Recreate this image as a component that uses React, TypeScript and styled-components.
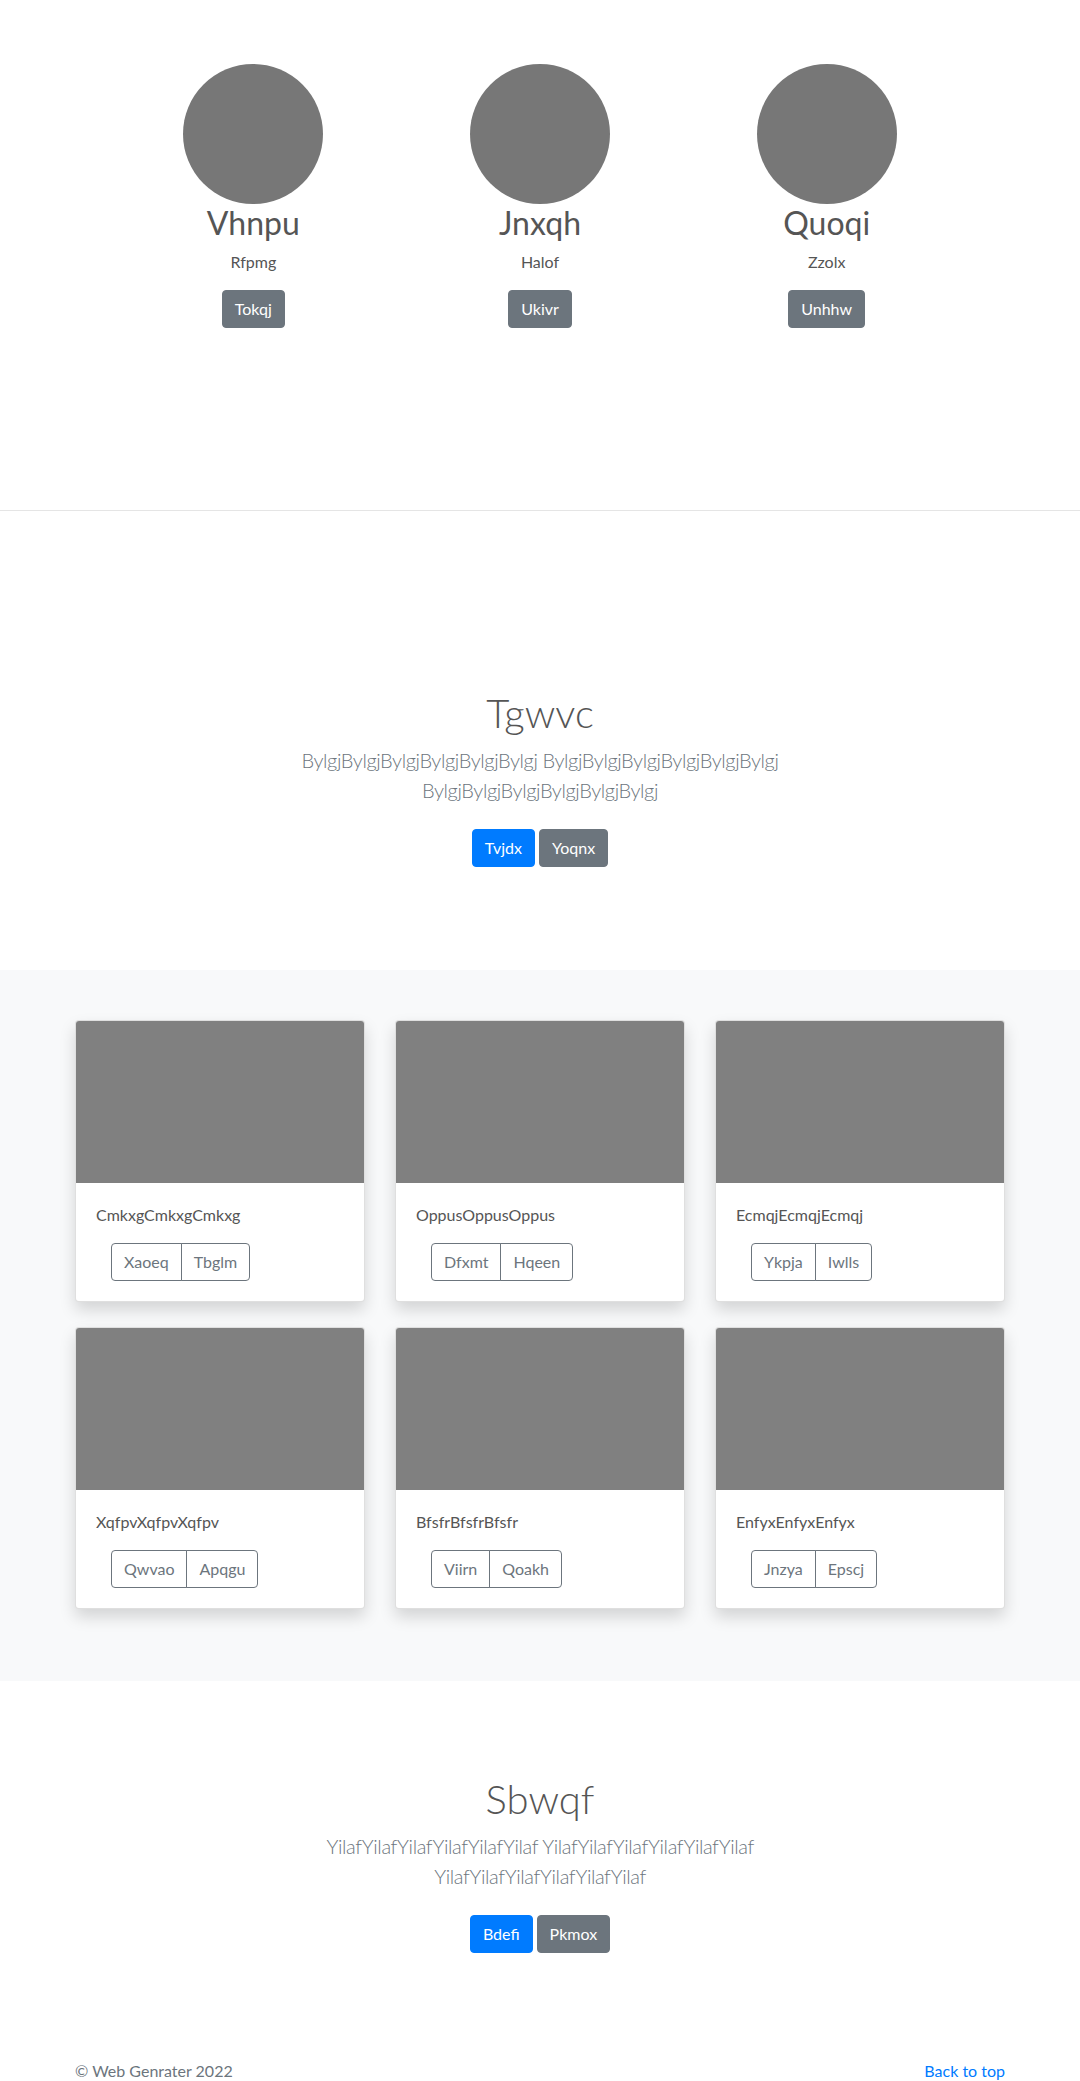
import React from "react";
import styled, { createGlobalStyle, css } from "styled-components";

const GlobalStyle = createGlobalStyle`
  html, body { margin: 0; padding: 0; background: #fff; }
  body {
    font-family: Lato, "Open Sans", Arial, sans-serif;
    font-size: 16px;
    line-height: 1.5;
    color: #212529;
  }
  * { box-sizing: border-box; }
`;

const Page = styled.div`
  width: 100%;
`;

const Marketing = styled.section`
  padding: 64px 0 182px;
  border-bottom: 1px solid #e5e5e5;
`;

const MarketingRow = styled.div`
  width: 860px;
  margin: 0 auto;
  display: grid;
  grid-template-columns: repeat(3, 1fr);
`;

const Person = styled.div`
  display: flex;
  flex-direction: column;
  align-items: center;
  text-align: center;
`;

const Avatar = styled.div`
  width: 140px;
  height: 140px;
  border-radius: 50%;
  background: #777777;
`;

const PersonName = styled.h2`
  margin: 0 0 8px;
  font-size: 32px;
  font-weight: 400;
  line-height: 1.2;
  color: #555;
`;

const PersonRole = styled.p`
  margin: 0 0 16px;
  font-size: 16px;
  line-height: 24px;
  color: #555;
`;

const Button = styled.a<{ $variant: "primary" | "secondary" }>`
  display: inline-block;
  padding: 6px 12px;
  font-size: 16px;
  line-height: 24px;
  border-radius: 4px;
  border: 1px solid transparent;
  color: #fff;
  text-decoration: none;
  cursor: pointer;
  ${(p) =>
    p.$variant === "primary"
      ? css`
          background: #007bff;
          border-color: #007bff;
        `
      : css`
          background: #6c757d;
          border-color: #6c757d;
        `}
`;

const Hero = styled.section<{ $top: number; $bottom: number }>`
  padding: ${(p) => p.$top}px 0 ${(p) => p.$bottom}px;
  text-align: center;
`;

const HeroInner = styled.div`
  width: 610px;
  margin: 0 auto;
`;

const HeroTitle = styled.h1`
  margin: 0 0 8px;
  font-size: 40px;
  font-weight: 300;
  line-height: 48px;
  color: #555;
`;

const Lead = styled.p`
  margin: 0 0 16px;
  font-size: 20px;
  font-weight: 300;
  line-height: 30px;
  letter-spacing: -0.4px;
  color: #6c757d;
`;

const ButtonRow = styled.div`
  padding: 8px 0;
  display: flex;
  justify-content: center;
  gap: 4px;
`;

const Album = styled.section`
  background: #f8f9fa;
  padding: 50px 0 48px;
`;

const CardGrid = styled.div`
  width: 930px;
  margin: 0 auto;
  display: grid;
  grid-template-columns: repeat(3, 290px);
  column-gap: 30px;
  row-gap: 25px;
`;

const Card = styled.div`
  background: #fff;
  border: 1px solid rgba(0, 0, 0, 0.125);
  border-radius: 4px;
  box-shadow: 0 8px 16px rgba(0, 0, 0, 0.15);
  overflow: hidden;
`;

const CardImage = styled.div`
  height: 162px;
  background: #808080;
`;

const CardBody = styled.div`
  padding: 20px;
`;

const CardText = styled.p`
  margin: 0 0 16px;
  font-size: 16px;
  line-height: 24px;
  color: #555;
`;

const ButtonGroup = styled.div`
  display: inline-flex;
  margin-left: 15px;
`;

const OutlineButton = styled.button`
  font-family: inherit;
  font-size: 16px;
  line-height: 24px;
  padding: 6px 12px;
  background: transparent;
  color: #6c757d;
  border: 1px solid #6c757d;
  cursor: pointer;
  &:first-child {
    border-radius: 4px 0 0 4px;
  }
  &:last-child {
    border-radius: 0 4px 4px 0;
    margin-left: -1px;
  }
`;

const AlbumBottom = styled.div`
  height: 24px;
`;

const Footer = styled.footer`
  width: 930px;
  margin: 0 auto;
  padding: 48px 0;
  display: flex;
  justify-content: space-between;
  font-size: 16px;
  line-height: 24px;
`;

const FooterText = styled.p`
  margin: 0;
  color: #6c757d;
`;

const FooterLink = styled.a`
  color: #007bff;
  text-decoration: none;
`;

const people = [
  { name: "Vhnpu", role: "Rfpmg", btn: "Tokqj" },
  { name: "Jnxqh", role: "Halof", btn: "Ukivr" },
  { name: "Quoqi", role: "Zzolx", btn: "Unhhw" },
];

const cards = [
  { text: "CmkxgCmkxgCmkxg", a: "Xaoeq", b: "Tbglm" },
  { text: "OppusOppusOppus", a: "Dfxmt", b: "Hqeen" },
  { text: "EcmqjEcmqjEcmqj", a: "Ykpja", b: "Iwlls" },
  { text: "XqfpvXqfpvXqfpv", a: "Qwvao", b: "Apqgu" },
  { text: "BfsfrBfsfrBfsfr", a: "Viirn", b: "Qoakh" },
  { text: "EnfyxEnfyxEnfyx", a: "Jnzya", b: "Epscj" },
];

const rep = (w: string, n: number) => Array(n).fill(w).join("");

export default function App() {
  return (
    <Page>
      <GlobalStyle />
      <Marketing>
        <MarketingRow>
          {people.map((p) => (
            <Person key={p.name}>
              <Avatar />
              <PersonName>{p.name}</PersonName>
              <PersonRole>{p.role}</PersonRole>
              <Button $variant="secondary">{p.btn}</Button>
            </Person>
          ))}
        </MarketingRow>
      </Marketing>

      <Hero $top={178} $bottom={95}>
        <HeroInner>
          <HeroTitle>Tgwvc</HeroTitle>
          <Lead>
            {rep("Bylgj", 6)} {rep("Bylgj", 6)} {rep("Bylgj", 6)}
          </Lead>
          <ButtonRow>
            <Button $variant="primary">Tvjdx</Button>
            <Button $variant="secondary">Yoqnx</Button>
          </ButtonRow>
        </HeroInner>
      </Hero>

      <Album>
        <CardGrid>
          {cards.map((c) => (
            <Card key={c.text}>
              <CardImage />
              <CardBody>
                <CardText>{c.text}</CardText>
                <ButtonGroup>
                  <OutlineButton>{c.a}</OutlineButton>
                  <OutlineButton>{c.b}</OutlineButton>
                </ButtonGroup>
              </CardBody>
            </Card>
          ))}
        </CardGrid>
        <AlbumBottom />
      </Album>

      <Hero $top={94} $bottom={50}>
        <HeroInner>
          <HeroTitle>Sbwqf</HeroTitle>
          <Lead>
            {rep("Yilaf", 6)} {rep("Yilaf", 6)} {rep("Yilaf", 6)}
          </Lead>
          <ButtonRow>
            <Button $variant="primary">Bdefi</Button>
            <Button $variant="secondary">Pkmox</Button>
          </ButtonRow>
        </HeroInner>
      </Hero>

      <Footer>
        <FooterText>© Web Genrater 2022</FooterText>
        <FooterLink href="#">Back to top</FooterLink>
      </Footer>
    </Page>
  );
}
